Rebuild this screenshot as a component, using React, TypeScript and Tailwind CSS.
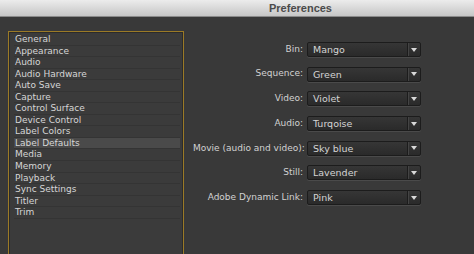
const categories = [
  "General",
  "Appearance",
  "Audio",
  "Audio Hardware",
  "Auto Save",
  "Capture",
  "Control Surface",
  "Device Control",
  "Label Colors",
  "Label Defaults",
  "Media",
  "Memory",
  "Playback",
  "Sync Settings",
  "Titler",
  "Trim",
];

const defaults = [
  { label: "Bin:", value: "Mango" },
  { label: "Sequence:", value: "Green" },
  { label: "Video:", value: "Violet" },
  { label: "Audio:", value: "Turqoise" },
  { label: "Movie (audio and video):", value: "Sky blue" },
  { label: "Still:", value: "Lavender" },
  { label: "Adobe Dynamic Link:", value: "Pink" },
];

function Dropdown({ value }: { value: string }) {
  return (
    <div className="flex h-[15px] w-[114px] items-stretch rounded-[2px] border border-[#1c1c1c] bg-gradient-to-b from-[#363636] to-[#2a2a2a] shadow-[0_1px_0_#4a4a4a]">
      <span className="flex-1 pl-[5px] text-[9.5px] leading-[13px] text-[#d4d4d4]">{value}</span>
      <span className="flex w-[13px] items-center justify-center border-l border-[#1c1c1c] shadow-[inset_1px_0_0_#444]">
        <svg width="6" height="4" viewBox="0 0 6 4">
          <path d="M0 0 H6 L3 4 Z" fill="#d8d8d8" />
        </svg>
      </span>
    </div>
  );
}

export default function App() {
  return (
    <div className="flex h-[254px] w-[474px] flex-col overflow-hidden bg-[#393939] font-['DejaVu_Sans',sans-serif]">
      <div className="flex h-[17px] shrink-0 items-center border-b border-[#8a8a8a] bg-gradient-to-b from-[#ececec] to-[#c6c6c6] pl-[269px]">
        <span className="font-['Liberation_Sans',sans-serif] text-[11px] font-bold text-[#4b4b4b]">
          Preferences
        </span>
      </div>
      <div className="flex flex-1 pl-[8px] pt-[14px]">
        <div className="h-[260px] w-[176px] shrink-0 border border-[#9b7a26] bg-[#2b2b2b] p-px">
          <ul className="h-full bg-[#3b3b3b] pl-[4px] pr-[2px] pt-px">
            {categories.map((name) => (
              <li
                key={name}
                className={`h-[11.55px] whitespace-nowrap border-b border-[#343434] pl-[1px] text-[9px] leading-[11px] text-[#d6d6d6] ${
                  name === "Label Defaults" ? "bg-[#4a4a4a]" : ""
                }`}
              >
                {name}
              </li>
            ))}
          </ul>
        </div>
        <div className="flex flex-col gap-[9.7px] pl-[9px] pt-[11px]">
          {defaults.map((row) => (
            <div key={row.label} className="flex items-center gap-[4px]">
              <span className="w-[110px] whitespace-nowrap text-right text-[9px] text-[#d2d2d2]">
                {row.label}
              </span>
              <Dropdown value={row.value} />
            </div>
          ))}
        </div>
      </div>
    </div>
  );
}
